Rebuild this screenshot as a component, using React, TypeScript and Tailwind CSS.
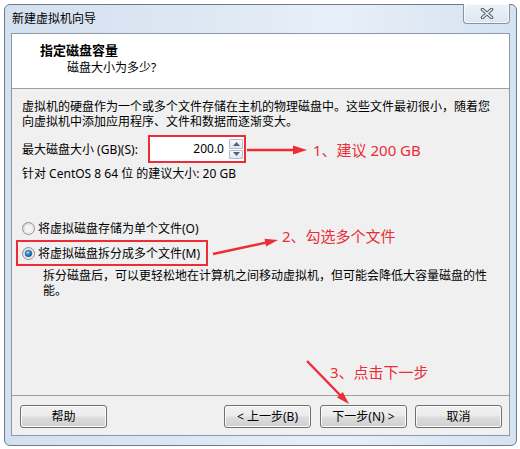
import React from "react";

const font = "font-['Noto_Sans','Noto_Sans_CJK_SC',sans-serif]";

const Btn: React.FC<{ children: React.ReactNode; className?: string }> = ({ children, className = "" }) => (
  <div
    className={`flex h-[23px] w-[87px] items-center justify-center rounded-[3px] border border-[#707070] bg-[linear-gradient(180deg,#f2f2f2_0%,#ebebeb_48%,#dddddd_52%,#cfcfcf_100%)] text-[12px] leading-none text-black shadow-[inset_0_0_0_1px_#fbfbfb] ${className}`}
  >
    {children}
  </div>
);

const Radio: React.FC<{ checked?: boolean; id: string }> = ({ checked, id }) => (
  <svg width="13" height="13" viewBox="0 0 13 13" className="shrink-0">
    <defs>
      <linearGradient id={`${id}-bg`} x1="0" y1="0" x2="1" y2="1">
        <stop offset="0" stopColor="#d4d4d4" />
        <stop offset="1" stopColor="#ffffff" />
      </linearGradient>
      <radialGradient id={`${id}-dot`} cx="0.4" cy="0.35" r="0.7">
        <stop offset="0" stopColor="#a6dcfb" />
        <stop offset="0.5" stopColor="#2a86c8" />
        <stop offset="1" stopColor="#0d3f7a" />
      </radialGradient>
    </defs>
    <circle cx="6.5" cy="6.5" r="6" fill={`url(#${id}-bg)`} stroke="#8e8f8f" />
    <circle cx="6.5" cy="6.5" r="4.3" fill="#f4f4f4" stroke="#dcdcdc" strokeWidth="0.6" />
    {checked && <circle cx="6.5" cy="6.5" r="3.3" fill={`url(#${id}-dot)`} stroke="#1c4e86" strokeWidth="0.6" />}
  </svg>
);

const SpinBtn: React.FC<{ up?: boolean }> = ({ up }) => (
  <div className="flex flex-1 items-center justify-center rounded-[1px] border border-[#b3bdca] bg-[linear-gradient(180deg,#f6f7f9,#e3e7ee)]">
    <svg width="7" height="4" viewBox="0 0 7 4">
      {up ? <polygon points="0,4 3.5,0 7,4" fill="#4d6185" /> : <polygon points="0,0 3.5,4 7,0" fill="#4d6185" />}
    </svg>
  </div>
);

export default function App() {
  const red = "#ec2d37";
  return (
    <div className={`relative h-[449px] w-[520px] overflow-hidden bg-white pl-[4px] pt-[4px] ${font}`}>
      <div className="flex h-[442px] w-[513px] flex-col rounded-[6px] border border-[#6e7b8c] bg-[linear-gradient(90deg,#d3e0ef_0%,#dce7f3_35%,#e8eff8_65%,#d5e2f0_100%)] px-[6px] pb-[9px]">
        {/* title bar */}
        <div className="flex h-[28px] items-start">
          <div className="flex-1 self-center pl-[1px] text-[12px] leading-none text-black">新建虚拟机向导</div>
          <div className="-mt-px flex h-[20px] w-[47px] items-center justify-center rounded-b-[4px] border border-t-0 border-[#8593a5] bg-[linear-gradient(180deg,#eef3f9,#dce5f0)] shadow-[inset_0_0_0_1px_#f7f9fc]">
            <svg width="14" height="11" viewBox="0 0 14 11">
              <path d="M2.5 1.5 L11.5 9.5 M11.5 1.5 L2.5 9.5" stroke="#535d6b" strokeWidth="3.6" strokeLinecap="round" />
              <path d="M2.5 1.5 L11.5 9.5 M11.5 1.5 L2.5 9.5" stroke="#eef1f5" strokeWidth="1.6" strokeLinecap="round" />
            </svg>
          </div>
        </div>

        {/* client */}
        <div className="flex flex-1 flex-col border border-[#8d99a9] bg-[#f0f0f0] text-[12px] text-black">
          <div className="h-[55px] border-b border-[#a0a0a0] bg-white pt-[7px]">
            <div className="pl-[28px] text-[13px] font-bold leading-[18px]">指定磁盘容量</div>
            <div className="pl-[55px] leading-[18px]">磁盘大小为多少?</div>
          </div>

          <div className="flex flex-1 flex-col pl-[10px]">
            <div className="mt-[10px] whitespace-nowrap leading-[16px]">
              虚拟机的硬盘作为一个或多个文件存储在主机的物理磁盘中。这些文件最初很小，随着您
            </div>
            <div className="whitespace-nowrap leading-[14px]">向虚拟机中添加应用程序、文件和数据而逐渐变大。</div>

            <div className="mt-[6px] flex h-[28px] items-center">
              <div className="w-[126px] whitespace-nowrap leading-[15px]">最大磁盘大小 (GB)(S):</div>
              <div className="flex h-[28px] w-[98px] border-2 border-[#ec2d37] bg-white">
                <div className="flex flex-1 items-center justify-end pr-[5px] leading-none">200.0</div>
                <div className="my-[2px] mr-[1px] flex w-[14px] flex-col gap-px">
                  <SpinBtn up />
                  <SpinBtn />
                </div>
              </div>
            </div>

            <div className="mt-[3px] leading-[15px]">针对 CentOS 8 64 位 的建议大小: 20 GB</div>

            <div className="mt-[40px] flex h-[15px] items-center gap-[3px]">
              <Radio id="r1" />
              <span className="leading-[15px]">将虚拟磁盘存储为单个文件(O)</span>
            </div>

            <div className="-ml-[6px] mt-[4px] flex h-[26px] w-[192px] items-center gap-[3px] border-2 border-[#ec2d37] pl-[4px]">
              <Radio id="r2" checked />
              <span className="leading-[15px]">将虚拟磁盘拆分成多个文件(M)</span>
            </div>

            <div className="mt-[2px] whitespace-nowrap pl-[21px] leading-[16px]">
              拆分磁盘后，可以更轻松地在计算机之间移动虚拟机，但可能会降低大容量磁盘的性
            </div>
            <div className="whitespace-nowrap pl-[21px] leading-[14px]">能。</div>
          </div>

          <div className="flex h-[40px] items-start border-t border-[#a0a0a0] pl-[8px] pt-[9px]">
            <Btn>帮助</Btn>
            <Btn className="ml-[117px]">&lt; 上一步(B)</Btn>
            <Btn className="ml-[9px]">下一步(N) &gt;</Btn>
            <Btn className="ml-[8px]">取消</Btn>
          </div>
        </div>
      </div>

      {/* annotations */}
      <svg className="pointer-events-none absolute left-0 top-0" width="520" height="449" viewBox="0 0 520 449">
        <line x1="247" y1="150" x2="295" y2="150" stroke={red} strokeWidth="2.4" />
        <polygon points="293,145.5 307,150 293,154.5" fill={red} />
        <line x1="213" y1="254" x2="266" y2="242.6" stroke={red} strokeWidth="2.4" />
        <polygon points="266.1,246.6 278,240 264.5,238.8" fill={red} />
        <line x1="307" y1="361" x2="341" y2="396" stroke={red} strokeWidth="2.4" />
        <polygon points="337,397.5 349,404 342.8,391.9" fill={red} />
      </svg>
      <div className="absolute left-[313px] top-[140px] whitespace-nowrap text-[15px] leading-[20px] text-[#ec2d37]">1、建议 200 GB</div>
      <div className="absolute left-[282px] top-[226px] whitespace-nowrap text-[15px] leading-[20px] text-[#ec2d37]">2、勾选多个文件</div>
      <div className="absolute left-[330px] top-[362px] whitespace-nowrap text-[15px] leading-[20px] text-[#ec2d37]">3、点击下一步</div>
    </div>
  );
}
